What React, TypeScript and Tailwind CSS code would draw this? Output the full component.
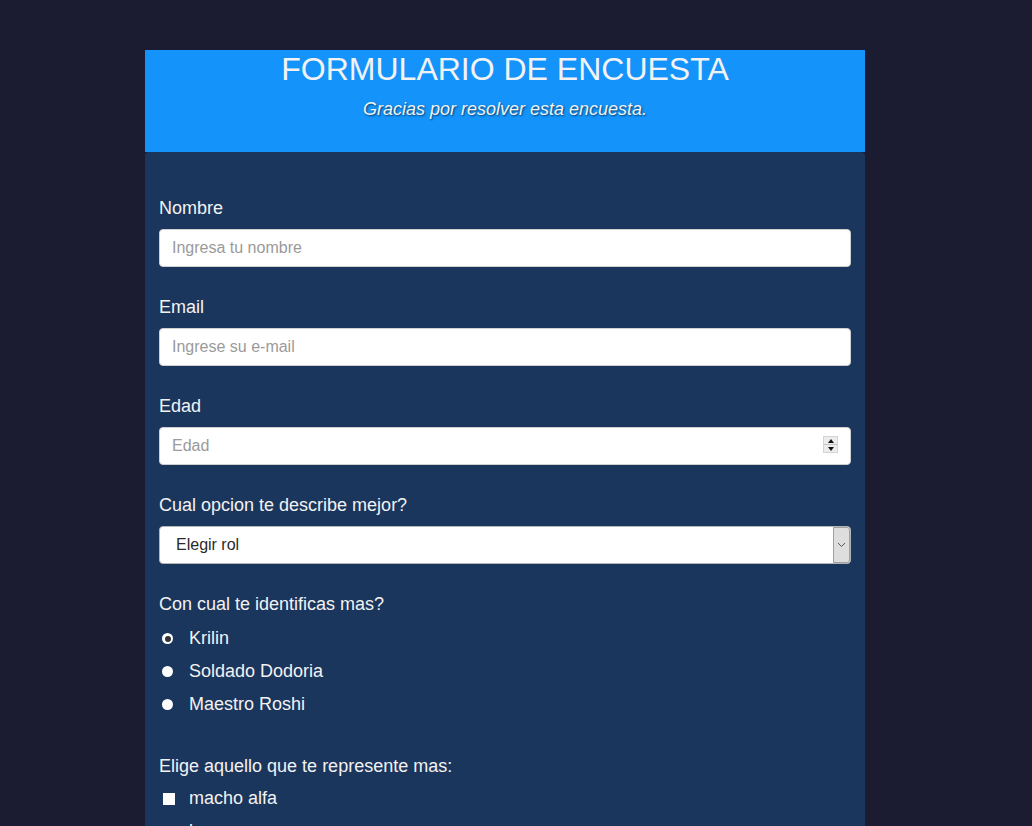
import { FC, ReactNode } from 'react';

const radios = [
  { label: 'Krilin', checked: true },
  { label: 'Soldado Dodoria', checked: false },
  { label: 'Maestro Roshi', checked: false }
];

const checks = ['macho alfa', 'buena persona', 'hombre sensible'];

const App: FC = () => {
  return (
    <div className="min-h-[826px] bg-[#1b1c31] pt-[50px] font-['Liberation_Sans',Arial,sans-serif] text-[#f2f2f2]">
      <div className="ml-[145px] w-[720px]">
        {/* header */}
        <header className="h-[102px] bg-[#1494fb] text-center">
          <h1 className="text-[32px] leading-[38px] font-normal">FORMULARIO DE ENCUESTA</h1>
          <p className="mt-[9px] text-[18px] leading-6 italic [text-shadow:1px_1px_2px_rgba(0,0,0,0.6)]">
            Gracias por resolver esta encuesta.
          </p>
        </header>

        {/* form */}
        <form className="rounded-t-[4px] bg-[#1b365d] px-[14px] pt-[44px] pb-[60px]">
          <Field label="Nombre">
            <input type="text" placeholder="Ingresa tu nombre" className={inputCls} />
          </Field>

          <Field label="Email">
            <input type="email" placeholder="Ingrese su e-mail" className={inputCls} />
          </Field>

          <Field label="Edad">
            <div className="relative">
              <input type="text" placeholder="Edad" className={inputCls} />
              <div className="absolute top-[9px] right-[13px] flex h-[17px] w-[15px] flex-col border border-[#d4d4d4] bg-[#ececec]">
                <div className="flex flex-1 items-center justify-center border-b border-[#c4c4c4]">
                  <span className="h-0 w-0 border-x-[3.5px] border-b-[4px] border-x-transparent border-b-[#111]" />
                </div>
                <div className="flex flex-1 items-center justify-center">
                  <span className="h-0 w-0 border-x-[3.5px] border-t-[4px] border-x-transparent border-t-[#111]" />
                </div>
              </div>
            </div>
          </Field>

          <Field label="Cual opcion te describe mejor?">
            <div className="relative">
              <select className="h-[38px] w-full appearance-none rounded-[4px] border border-[#b5b5b5] bg-white pl-[16px] text-[16px] text-[#2a2a2a] outline-none">
                <option>Elegir rol</option>
                <option>Estudiante</option>
                <option>Trabajador</option>
              </select>
              <div className="pointer-events-none absolute top-px right-px bottom-px flex w-[17px] items-center justify-center rounded-r-[3px] border border-[#a0a0a0] bg-[#dedede]">
                <svg width="9" height="6" viewBox="0 0 9 6" fill="none">
                  <path d="M1 1l3.5 3.5L8 1" stroke="#555" strokeWidth="1" />
                </svg>
              </div>
            </div>
          </Field>

          <div className="mb-[33px]">
            <div className="text-[18px] leading-6">Con cual te identificas mas?</div>
            <div className="mt-[6px]">
              {radios.map((r) => (
                <label key={r.label} className="flex h-[33px] items-center text-[18px]">
                  <span className="ml-[3px] flex h-[11px] w-[11px] items-center justify-center rounded-full bg-white">
                    {r.checked && <span className="h-[6px] w-[6px] rounded-full bg-[#333]" />}
                  </span>
                  <span className="ml-[16px]">{r.label}</span>
                </label>
              ))}
            </div>
          </div>

          <div>
            <div className="text-[18px] leading-6">Elige aquello que te represente mas:</div>
            <div className="mt-[4px]">
              {checks.map((c) => (
                <label key={c} className="flex h-[33px] items-center text-[18px]">
                  <span className="ml-[4px] h-[12px] w-[12px] bg-white" />
                  <span className="ml-[14px]">{c}</span>
                </label>
              ))}
            </div>
          </div>
        </form>
      </div>
    </div>
  );
};

export default App;

// ============================================================

const inputCls =
  'block h-[38px] w-full rounded-[4px] border border-[#cfcfcf] bg-white px-[12px] text-[16px] text-[#222] outline-none placeholder:text-[#9a9a9a]';

interface FieldProps {
  label: string;
  children: ReactNode;
}

function Field({ label, children }: FieldProps) {
  return (
    <div className="mb-[28px]">
      <label className="mb-[9px] block text-[18px] leading-6">{label}</label>
      {children}
    </div>
  );
}
